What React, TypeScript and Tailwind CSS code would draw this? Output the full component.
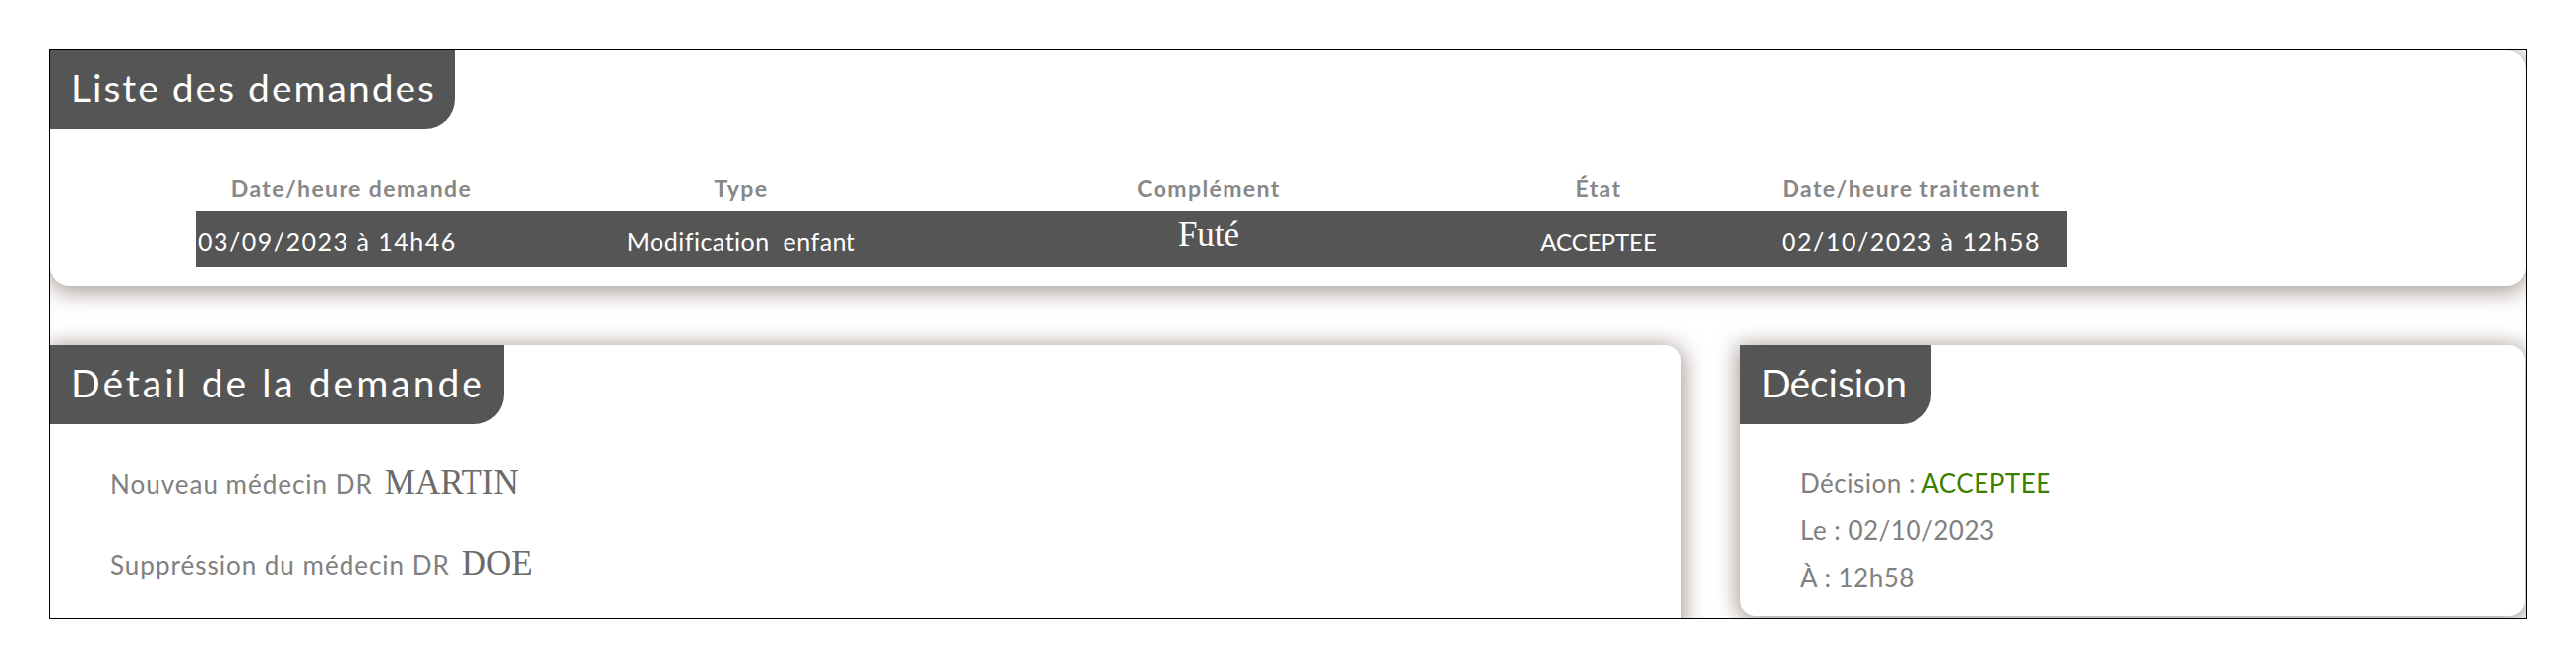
const sans = "font-['Lato',sans-serif]"
const serif = "font-['Liberation_Serif',serif]"

const columns = [
  { label: 'Date/heure demande', width: 'w-[316px]' },
  { label: 'Type', width: 'w-[476px]' },
  { label: 'Complément', width: 'w-[474px]' },
  { label: 'État', width: 'w-[318px]' },
  { label: 'Date/heure traitement', width: 'w-[317px]' },
]

function Tab({ title, width, tracking }: { title: string; width: string; tracking: string }) {
  return (
    <div
      className={`${width} ${tracking} h-[80px] shrink-0 bg-[#555555] rounded-br-[30px] flex items-center pl-[21px] pb-[4px] text-white text-[39px] whitespace-nowrap ${sans}`}
    >
      {title}
    </div>
  )
}

export default function App() {
  return (
    <div className={`min-h-screen bg-white pt-[50px] ${sans}`}>
      <div className="mx-[50px] h-[579px] border border-black overflow-hidden flex flex-col">
        {/* Liste des demandes */}
        <div className="h-[240px] shrink-0 bg-white rounded-[20px] rounded-tl-none shadow-[0_3px_22px_3px_rgba(95,75,65,0.55)] relative z-10">
          <Tab title="Liste des demandes" width="w-[411px]" tracking="tracking-[2px]" />
          <div className="pl-[148px] pt-[43px]">
            <div className="flex h-[40px] items-start">
              {columns.map((c) => (
                <div
                  key={c.label}
                  className={`${c.width} text-center text-[23px] font-bold tracking-[1.4px] text-[#888888] whitespace-nowrap`}
                >
                  {c.label}
                </div>
              ))}
            </div>
            <div className="flex h-[57px] w-[1901px] bg-[#555555] items-center text-white text-[25px] whitespace-nowrap">
              <div className="w-[316px] pl-[2px] pt-[6px] tracking-[1.5px]">03/09/2023 à 14h46</div>
              <div className="w-[476px] text-center pt-[6px] whitespace-pre tracking-[0.5px]">Modification  enfant</div>
              <div className={`w-[474px] text-center text-[35px] pb-[6px] ${serif}`}>Futé</div>
              <div className="w-[318px] text-center pt-[6px] text-[24px]">ACCEPTEE</div>
              <div className="w-[317px] text-center pt-[6px] tracking-[1.5px]">02/10/2023 à 12h58</div>
            </div>
          </div>
        </div>

        <div className="flex gap-[60px] mt-[60px]">
          {/* Détail de la demande */}
          <div className="w-[1657px] h-[320px] shrink-0 bg-white rounded-[16px] rounded-tl-none shadow-[0_3px_22px_3px_rgba(95,75,65,0.55)]">
            <Tab title="Détail de la demande" width="w-[461px]" tracking="tracking-[3px]" />
            <div className="pl-[61px] pt-[34px] text-[26px] text-[#808080] flex flex-col gap-[29px]">
              <div className="flex items-baseline gap-[12px]">
                <span className="tracking-[1px]">Nouveau médecin DR</span>
                <span className={`${serif} text-[35px] text-[#6b6b6b]`}>MARTIN</span>
              </div>
              <div className="flex items-baseline gap-[12px]">
                <span className="tracking-[1px]">Suppréssion du médecin DR</span>
                <span className={`${serif} text-[35px] text-[#6b6b6b]`}>DOE</span>
              </div>
            </div>
          </div>

          {/* Décision */}
          <div className="w-[797px] h-[275px] shrink-0 bg-white rounded-[16px] rounded-tl-none shadow-[0_3px_22px_3px_rgba(95,75,65,0.55)]">
            <Tab title="Décision" width="w-[194px]" tracking="tracking-[0px]" />
            <div className="pl-[61px] pt-[42px] text-[26px] text-[#808080] flex flex-col gap-[12px] leading-[36px] tracking-[0.5px]">
              <div>
                Décision : <span className="text-[#3a7f00]">ACCEPTEE</span>
              </div>
              <div>Le : 02/10/2023</div>
              <div>À : 12h58</div>
            </div>
          </div>
        </div>
      </div>
    </div>
  )
}
